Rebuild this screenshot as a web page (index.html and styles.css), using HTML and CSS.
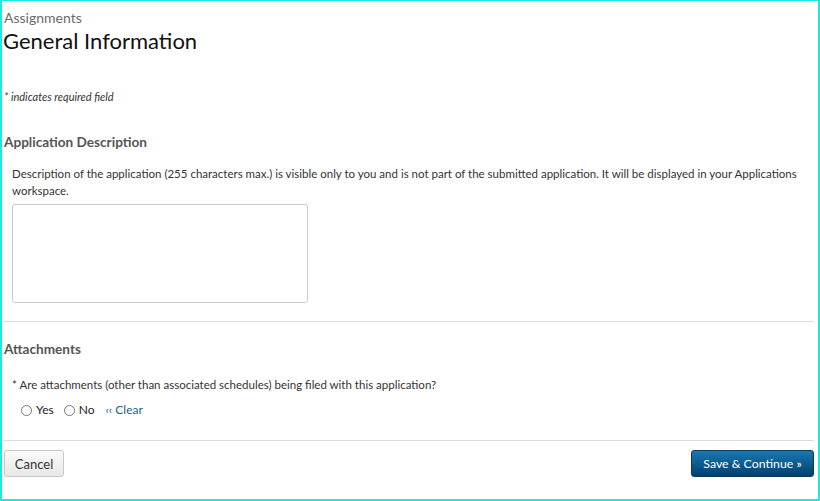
FILE: index.html
```html
<!DOCTYPE html>
<html>
<head>
<meta charset="utf-8">
<link rel="stylesheet" href="styles.css">
</head>
<body>
<div class="frame">
  <div class="crumb">Assignments</div>
  <h1 class="title">General Information</h1>
  <p class="req">* indicates required field</p>

  <section class="sec sec-desc">
    <h2 class="sec-title">Application Description</h2>
    <p class="desc">Description of the application (255 characters max.) is visible only to you and is not part of the submitted application. It will be displayed in your Applications workspace.</p>
    <textarea class="ta"></textarea>
  </section>

  <hr class="rule rule-1">

  <section class="sec sec-att">
    <h2 class="sec-title">Attachments</h2>
    <p class="q">* Are attachments (other than associated schedules) being filed with this application?</p>
    <div class="radios">
      <label class="radio"><span class="dot"></span>Yes</label>
      <label class="radio"><span class="dot"></span>No</label>
      <a class="clear">‹‹ Clear</a>
    </div>
  </section>

  <hr class="rule rule-2">

  <div class="actions">
    <button class="btn btn-cancel">Cancel</button>
    <button class="btn btn-save">Save &amp; Continue »</button>
  </div>
</div>
</body>
</html>
```

FILE: styles.css
```css
* { box-sizing: border-box; }
html, body { margin: 0; padding: 0; background: #fff; }
body { font-family: Lato, "Open Sans", sans-serif; color: #333; }

.frame {
  width: 820px;
  height: 501px;
  border-style: solid;
  border-color: #1de8e8;
  border-width: 1px 2px 2px 2px;
  padding: 8px 4px 0 1px;
}

.crumb {
  font-size: 14px;
  color: #6b6b6b;
  line-height: 17px;
  padding-left: 1px;
}
.title {
  margin: 0;
  font-size: 22px;
  font-weight: 400;
  color: #111;
  line-height: 30px;
}
.req {
  margin: 34px 0 0 1px;
  font-size: 11px;
  font-style: italic;
  color: #333;
  line-height: 14px;
}

.sec-title {
  margin: 0;
  font-size: 13.6px;
  font-weight: 700;
  color: #555;
  line-height: 18px;
  padding-left: 1px;
}
.sec-desc .sec-title { margin-top: 29px; }
.sec-att .sec-title { margin-top: 18px; }

.desc {
  margin: 14px 0 0 9px;
  font-size: 11.5px;
  line-height: 17px;
  color: #333;
}
.ta {
  display: block;
  margin: 5px 0 0 9px;
  width: 296px;
  height: 99px;
  border: 1px solid #ccc;
  border-radius: 3px;
  resize: none;
}

.rule {
  border: 0;
  border-top: 1px solid #ddd;
  margin: 0;
}
.rule-1 { margin-top: 18px; }

.q {
  margin: 19px 0 0 9px;
  font-size: 11.5px;
  line-height: 16px;
  color: #333;
}
.radios {
  display: flex;
  align-items: center;
  margin: 9px 0 0 18px;
  font-size: 12px;
  color: #222;
  line-height: 16px;
}
.radio {
  display: flex;
  align-items: center;
  margin-right: 10px;
}
.dot {
  width: 11px;
  height: 11px;
  border: 1px solid #777;
  border-radius: 50%;
  margin-right: 4px;
  background: #fff;
}
.clear {
  color: #1f5f8f;
  margin-left: 1px;
}

.rule-2 { margin-top: 22px; }

.actions {
  display: flex;
  justify-content: space-between;
  margin-top: 9px;
  padding-left: 1px;
}
.btn {
  height: 27px;
  border-radius: 3px;
  font-family: Lato, sans-serif;
  font-size: 13px;
  padding: 0;
  white-space: nowrap;
  cursor: pointer;
}
.btn-cancel {
  width: 60px;
  border: 1px solid #c8c8c8;
  background: linear-gradient(#fafafa, #e8e8e8);
  color: #333;
}
.btn-save {
  width: 123px;
  font-size: 12.3px;
  border: 1px solid #0a3a5e;
  background: linear-gradient(#1a78b0, #00406e);
  color: #fff;
  margin-right: 0;
}
```
